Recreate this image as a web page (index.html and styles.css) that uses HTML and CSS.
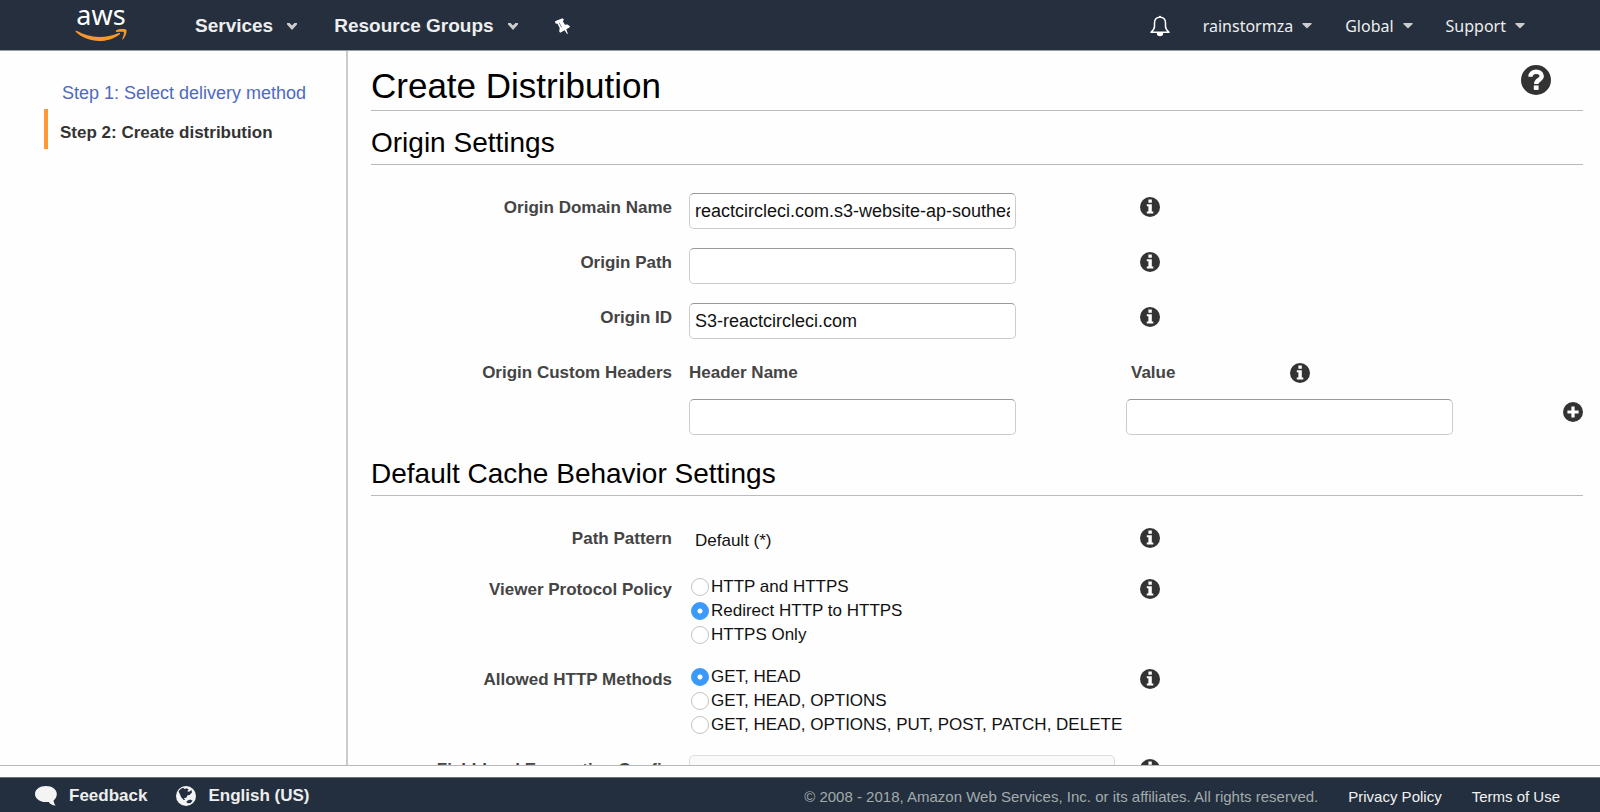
FILE: index.html
```html
<!DOCTYPE html>
<html lang="en">
<head>
<meta charset="utf-8">
<title>Create Distribution</title>
<link rel="stylesheet" href="styles.css">
</head>
<body>
<svg class="sprite" aria-hidden="true">
  <symbol id="info" viewBox="0 0 20 20">
    <circle cx="10" cy="10" r="10" fill="#333"/>
    <path fill="#fff" d="M8.4 2.6h3.4v3.2H8.4zM6.8 7.2h5v7.2h1.5v2H6.8v-2h1.6V9.2H6.8z"/>
  </symbol>
  <symbol id="plus" viewBox="0 0 20 20">
    <circle cx="10" cy="10" r="10" fill="#333"/>
    <path fill="#fff" d="M8.4 4.4h3.2v4h4v3.2h-4v4H8.4v-4h-4V8.4h4z"/>
  </symbol>
  <symbol id="chevron" viewBox="0 0 10 7">
    <path fill="currentColor" d="M0 0h2.6L5 2.6 7.4 0H10v1.4L5 7 0 1.4z"/>
  </symbol>
  <symbol id="caret" viewBox="0 0 10 6">
    <path fill="currentColor" d="M.4 0h9.2v1L5 5.6.4 1z"/>
  </symbol>
</svg>

<header class="topbar">
  <a class="logo" href="#" aria-label="AWS home">
    <span class="logo-text">aws</span>
    <svg class="logo-smile" viewBox="0 0 52 14" aria-hidden="true">
      <path fill="#f7982f" d="M.6 2.2C.9 1.6 1.5 1.6 2.2 2 8.600 5.800 16 7.900 24.500 7.900c6.300 0 13-1.400 19.300-4 1-.4 1.800.7.800 1.500C39.200 9.600 31.200 12 24.300 12 15 12 6.700 8.500.9 3.100c-.3-.3-.5-.6-.3-.9z"/>
      <path fill="#f7982f" d="M41.200 1.300C43.300 0 46-.3 48.200 0c1.500.1 2.800.4 3.100.8.700 1-.1 6.800-3.300 9.500-.6.400-1 .2-.8-.4.800-1.900 2.300-5.700 1.600-6.600-.7-.9-4.600-.5-6.800-.200-.9.100-1.400-.7-.8-1.800z"/>
    </svg>
  </a>
  <nav class="nav-main">
    <button class="menu" type="button">Services <svg class="chevron" aria-hidden="true"><use href="#chevron"/></svg></button>
    <button class="menu" type="button">Resource Groups <svg class="chevron" aria-hidden="true"><use href="#chevron"/></svg></button>
    <button class="icon-button" type="button" aria-label="Pin shortcuts">
      <svg class="pin" viewBox="0 0 16 17" aria-hidden="true">
        <path fill="#fff" d="M0 3.200 7.500.2l1.400 1.200-1 1.800 2 3.600 2.500-.2L15 8.200l-.6 1.200-3.100 1.800 1.600 4.800-1-.2-2.200-3.600-4.600 2.600-.9-1.600.5-3.200-2.200-4.200-2-.2z"/>
        <path stroke="#7b828c" fill="none" d="m4.200 4.800 2.400 4.600"/>
      </svg>
    </button>
  </nav>
  <nav class="nav-account">
    <button class="icon-button" type="button" aria-label="Notifications">
      <svg class="bell" viewBox="0 0 20 22" aria-hidden="true">
        <path fill="none" stroke="#fff" stroke-width="1.500" stroke-linejoin="round" d="M10 2.200C6.300 2.200 4.500 4.800 4.500 8v3.500C4.500 14 3 15.500 1 17.300h18c-2-1.800-3.500-3.300-3.500-5.800V8c0-3.200-1.800-5.800-5.500-5.800z"/>
        <path fill="#fff" d="M8.800 2a1.200 1.200 0 0 1 2.400 0zM6.800 18h6.400a3.200 3.200 0 0 1-6.400 0z"/>
      </svg>
    </button>
    <button class="account" type="button">rainstormza <svg class="caret" aria-hidden="true"><use href="#caret"/></svg></button>
    <button class="account" type="button">Global <svg class="caret" aria-hidden="true"><use href="#caret"/></svg></button>
    <button class="account" type="button">Support <svg class="caret" aria-hidden="true"><use href="#caret"/></svg></button>
  </nav>
</header>

<div class="page">
  <aside class="steps">
    <a class="step" href="#">Step 1: Select delivery method</a>
    <div class="step step-current" aria-current="step">Step 2: Create distribution</div>
  </aside>

  <main class="content">
    <div class="title">
      <h1>Create Distribution</h1>
      <button class="icon-button help-button" type="button" aria-label="Help">
        <svg class="help" viewBox="0 0 30 30" aria-hidden="true">
          <circle cx="15" cy="15" r="15" fill="#333"/>
          <path fill="none" stroke="#fff" stroke-width="4.400" d="M9.500 11.800c0-3.600 2.600-5 5.600-5 3.400 0 5.600 1.700 5.600 4.300 0 3.900-5.500 3.700-5.500 7.900"/>
          <path fill="#fff" d="M12.800 20.400h4.800v4.500h-4.800z"/>
        </svg>
      </button>
    </div>

    <section>
      <h2>Origin Settings</h2>
      <div class="rows">
        <div class="row">
          <label class="name" for="domain">Origin Domain Name</label>
          <div class="control"><input class="text" id="domain" type="text" value="reactcircleci.com.s3-website-ap-southeast-2.amazonaws.com"></div>
          <div class="extra"><button class="icon-button" type="button" aria-label="About Origin Domain Name"><svg class="badge" aria-hidden="true"><use href="#info"/></svg></button></div>
        </div>
        <div class="row">
          <label class="name" for="path">Origin Path</label>
          <div class="control"><input class="text" id="path" type="text"></div>
          <div class="extra"><button class="icon-button" type="button" aria-label="About Origin Path"><svg class="badge" aria-hidden="true"><use href="#info"/></svg></button></div>
        </div>
        <div class="row">
          <label class="name" for="origin-id">Origin ID</label>
          <div class="control"><input class="text" id="origin-id" type="text" value="S3-reactcircleci.com"></div>
          <div class="extra"><button class="icon-button" type="button" aria-label="About Origin ID"><svg class="badge" aria-hidden="true"><use href="#info"/></svg></button></div>
        </div>
        <div class="row row-headers">
          <span class="name">Origin Custom Headers</span>
          <div class="control">
            <label class="column-name" for="header-name">Header Name</label>
            <input class="text" id="header-name" type="text">
          </div>
          <div class="control">
            <div class="value-head">
              <label class="column-name" for="header-value">Value</label>
              <button class="icon-button" type="button" aria-label="About Origin Custom Headers"><svg class="badge" aria-hidden="true"><use href="#info"/></svg></button>
            </div>
            <div class="value-line">
              <input class="text" id="header-value" type="text">
              <button class="icon-button" type="button" aria-label="Add header"><svg class="badge" aria-hidden="true"><use href="#plus"/></svg></button>
            </div>
          </div>
        </div>
      </div>
    </section>

    <section>
      <h2>Default Cache Behavior Settings</h2>
      <div class="rows rows-tight">
        <div class="row">
          <span class="name">Path Pattern</span>
          <div class="static">Default (*)</div>
          <div class="extra"><button class="icon-button" type="button" aria-label="About Path Pattern"><svg class="badge" aria-hidden="true"><use href="#info"/></svg></button></div>
        </div>
        <div class="row">
          <span class="name" id="viewer">Viewer Protocol Policy</span>
          <div class="options" role="radiogroup" aria-labelledby="viewer">
            <label class="option"><input class="radio" type="radio" name="viewer">HTTP and HTTPS</label>
            <label class="option"><input class="radio" type="radio" name="viewer" checked>Redirect HTTP to HTTPS</label>
            <label class="option"><input class="radio" type="radio" name="viewer">HTTPS Only</label>
          </div>
          <div class="extra"><button class="icon-button" type="button" aria-label="About Viewer Protocol Policy"><svg class="badge" aria-hidden="true"><use href="#info"/></svg></button></div>
        </div>
        <div class="row">
          <span class="name" id="methods">Allowed HTTP Methods</span>
          <div class="options" role="radiogroup" aria-labelledby="methods">
            <label class="option"><input class="radio" type="radio" name="methods" checked>GET, HEAD</label>
            <label class="option"><input class="radio" type="radio" name="methods">GET, HEAD, OPTIONS</label>
            <label class="option"><input class="radio" type="radio" name="methods">GET, HEAD, OPTIONS, PUT, POST, PATCH, DELETE</label>
          </div>
          <div class="extra"><button class="icon-button" type="button" aria-label="About Allowed HTTP Methods"><svg class="badge" aria-hidden="true"><use href="#info"/></svg></button></div>
        </div>
        <div class="row">
          <label class="name" for="encryption">Field-level Encryption Config</label>
          <div class="control"><select class="select" id="encryption"><option></option></select></div>
          <div class="extra"><button class="icon-button" type="button" aria-label="About Field-level Encryption Config"><svg class="badge" aria-hidden="true"><use href="#info"/></svg></button></div>
        </div>
      </div>
    </section>
  </main>
</div>

<footer class="footer">
  <a class="footer-tool" href="#">
    <svg class="bubble" viewBox="0 0 22 20" aria-hidden="true"><path fill="#f4f4f4" d="M11 0c6.100 0 10.800 3.500 10.800 8 0 2.800-1.400 4.900-3.200 6.400.2 2.200.8 3.700 2.100 5.200-3.400-.1-5.400-1.400-7-3.600-.6.100-1.800.1-2.700.1C4.800 16.100 0 12.600 0 8s4.800-8 11-8z"/></svg>
    Feedback
  </a>
  <a class="footer-tool" href="#">
    <svg class="globe" viewBox="0 0 20 20" aria-hidden="true">
      <circle cx="10" cy="10" r="10" fill="#f4f4f4"/>
      <path fill="#252f3e" d="M2.600 5.600C3.600 3.800 5 2.500 7 1.800l1.700 1.300 2-.9 2 1.300-1.500 1.700 1.900.6 2.400-1.800.5 2.600-2.500 2.400-2 .3-1.200 2.400-2.400.3 1.300 1.700-1.500.2-2.500-2.600-1.400-3.200zM11.700 14.600l2.600-1.100 2.300 1.300-2 2.300-2.700.2-1.700-1.300z"/>
    </svg>
    English (US)
  </a>
  <div class="legal">
    <span class="copyright">© 2008 - 2018, Amazon Web Services, Inc. or its affiliates. All rights reserved.</span>
    <a class="legal-link" href="#">Privacy Policy</a>
    <a class="legal-link" href="#">Terms of Use</a>
  </div>
</footer>
</body>
</html>
```
FILE: styles.css
```css
* {
  box-sizing: border-box;
}

body {
  display: flex;
  flex-direction: column;
  height: 100vh;
  margin: 0;
  overflow: hidden;
  background: #fefefe;
  color: #111;
  font-family: "Liberation Sans", Arial, sans-serif;
  font-size: 17px;
}

a {
  color: inherit;
  text-decoration: none;
}

button {
  padding: 0;
  border: 0;
  background: none;
  color: inherit;
  font: inherit;
  cursor: pointer;
}

.sprite {
  display: none;
}

.icon-button {
  display: flex;
}

/* Top bar */

.topbar {
  display: flex;
  flex: none;
  align-items: center;
  height: 51px;
  padding: 2px 75px 0;
  border-bottom: 1px solid #9a9da2;
  background: #252f3e;
  color: #eee;
}

.logo {
  display: flex;
  flex-direction: column;
  align-items: center;
  gap: 4px;
  width: 52px;
  margin-right: 68px;
  padding-bottom: 4px;
}

.logo-text {
  color: #fff;
  font: 27px/20px "Noto Sans", sans-serif;
}

.logo-smile {
  width: 52px;
  height: 14px;
}

.nav-main,
.nav-account {
  display: flex;
  align-items: center;
}

.nav-main {
  gap: 37px;
  text-shadow: 0 1px 1px #000;
}

.menu {
  display: flex;
  align-items: center;
  gap: 14px;
  font-size: 19px;
  font-weight: bold;
}

.chevron {
  width: 10px;
  height: 7px;
  color: #ccc;
}

.pin {
  width: 16px;
  height: 17px;
}

.nav-account {
  gap: 33px;
  margin-left: auto;
  font-family: "Noto Sans", sans-serif;
  font-size: 16px;
  text-shadow: 0 1px 1px #000;
}

.bell {
  width: 20px;
  height: 22px;
}

.account {
  display: flex;
  align-items: center;
  gap: 9px;
}

.caret {
  width: 10px;
  height: 6px;
  color: #ccc;
}

/* Body */

.page {
  display: flex;
  flex: 1;
  min-height: 0;
  margin-bottom: 11px;
  border-bottom: 1px solid #b8b8b8;
  overflow: hidden;
}

.steps {
  flex: none;
  width: 348px;
  padding: 18px 0 0 44px;
  border-right: 2px solid #ccc;
}

.step {
  display: block;
  padding: 8px 0 0 18px;
  color: #4f69c0;
  font-size: 18px;
  line-height: 32px;
}

.step-current {
  padding-left: 12px;
  border-left: 4px solid #f93;
  color: #333;
  font-size: 17px;
  font-weight: bold;
}

.content {
  flex: 1;
  min-width: 0;
  padding: 13px 17px 0 23px;
}

.title {
  display: flex;
  justify-content: space-between;
  margin-bottom: 13px;
  padding-bottom: 2px;
  border-bottom: 1px solid #bbb;
}

h1,
h2 {
  margin: 0;
  color: #000;
  font-weight: normal;
}

h1 {
  font-size: 35px;
  line-height: 44px;
}

h2 {
  padding-bottom: 2px;
  border-bottom: 1px solid #bbb;
  font-size: 28px;
  line-height: 38px;
}

.help-button {
  margin: 1px 32px 0 0;
}

.help {
  width: 30px;
  height: 30px;
}

.rows {
  display: flex;
  flex-direction: column;
  gap: 19px;
  padding: 28px 0 20px;
}

.rows-tight {
  gap: 18px;
}

.row {
  display: grid;
  grid-template-columns: 318fr 437fr 457fr;
}

.name {
  padding-right: 17px;
  color: #444;
  font-weight: bold;
  line-height: 30px;
  text-align: right;
}

.control {
  min-width: 0;
}

.extra {
  display: flex;
  align-items: center;
  height: 28px;
  padding-left: 14px;
}

.badge {
  width: 20px;
  height: 20px;
}

.text {
  display: block;
  width: 327px;
  height: 36px;
  padding: 0 5px;
  border: 1px solid #ccc;
  border-top-color: #999;
  border-radius: 5px;
  background: #fff;
  color: #111;
  font: 18px "Liberation Sans", Arial, sans-serif;
}

.column-name {
  display: block;
  color: #444;
  font-weight: bold;
  line-height: 30px;
}

.row-headers .text {
  margin-top: 11px;
}

.value-head {
  display: flex;
  align-items: center;
  height: 30px;
  padding-left: 5px;
}

.value-head .column-name {
  width: 159px;
}

.value-line {
  display: flex;
  align-items: center;
  justify-content: space-between;
}

.static {
  padding: 3px 0 2px 6px;
  line-height: 28px;
}

.option {
  display: flex;
  align-items: center;
  gap: 2px;
  padding-left: 2px;
  line-height: 24px;
  white-space: nowrap;
}

.radio {
  appearance: none;
  width: 18px;
  height: 18px;
  margin: 0;
  border: 1px solid #c4c4c4;
  border-radius: 50%;
  background: #fff;
}

.radio:checked {
  border-color: #3b99fc;
  background: radial-gradient(circle, #fff 2px, #3b99fc 3px);
}

.select {
  appearance: none;
  width: 426px;
  height: 36px;
  border: 1px solid #ddd;
  border-radius: 5px;
  background: #fafafa;
}

/* Footer */

.footer {
  display: flex;
  flex: none;
  align-items: center;
  height: 35px;
  padding: 2px 40px 0 35px;
  border-top: 1px solid #6b727c;
  background: #232f3e;
  color: #eee;
}

.footer-tool {
  display: flex;
  align-items: center;
  gap: 12px;
  margin-right: 29px;
  font-weight: bold;
}

.bubble {
  width: 22px;
  height: 20px;
}

.globe {
  width: 20px;
  height: 20px;
}

.legal {
  display: flex;
  gap: 30px;
  margin-left: auto;
  font-size: 15px;
}

.copyright {
  color: #a3abad;
}

.legal-link {
  color: #f2f2f2;
}
```
